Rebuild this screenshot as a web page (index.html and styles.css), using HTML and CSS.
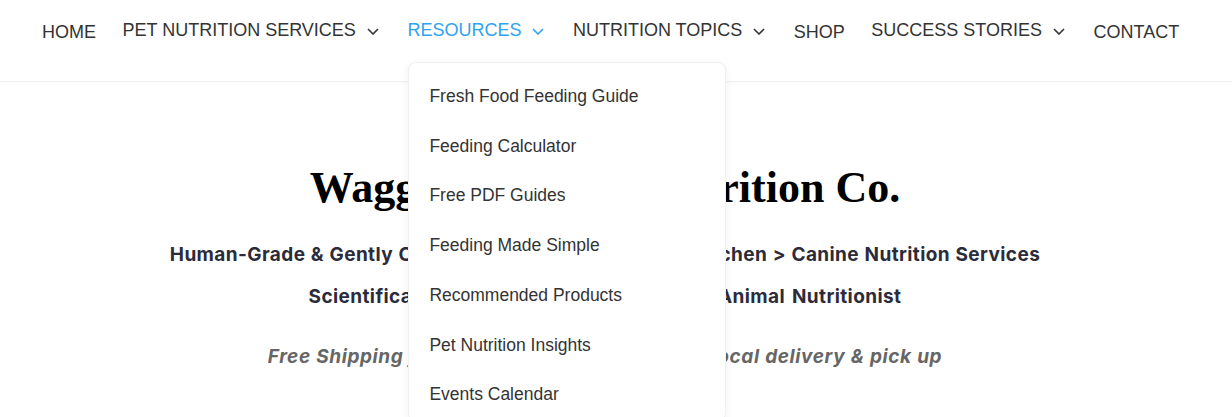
FILE: index.html
```html
<!DOCTYPE html>
<html lang="en">
<head>
<meta charset="utf-8">
<title>Waggin' Tails Pet Nutrition Co.</title>
<link rel="stylesheet" href="styles.css">
</head>
<body>
<header class="site-header">
  <nav class="main-nav">
    <ul class="nav-list">
      <li class="nav-item"><a class="nav-link" href="#">HOME</a></li>
      <li class="nav-item has-sub"><a class="nav-link" href="#">PET NUTRITION SERVICES<svg class="chev" viewBox="0 0 12 7"><path d="M1 1l5 5 5-5"/></svg></a></li>
      <li class="nav-item has-sub is-active"><a class="nav-link" href="#">RESOURCES<svg class="chev" viewBox="0 0 12 7"><path d="M1 1l5 5 5-5"/></svg></a>
        <ul class="dropdown">
          <li><a href="#">Fresh Food Feeding Guide</a></li>
          <li><a href="#">Feeding Calculator</a></li>
          <li><a href="#">Free PDF Guides</a></li>
          <li><a href="#">Feeding Made Simple</a></li>
          <li><a href="#">Recommended Products</a></li>
          <li><a href="#">Pet Nutrition Insights</a></li>
          <li><a href="#">Events Calendar</a></li>
        </ul>
      </li>
      <li class="nav-item has-sub"><a class="nav-link" href="#">NUTRITION TOPICS<svg class="chev" viewBox="0 0 12 7"><path d="M1 1l5 5 5-5"/></svg></a></li>
      <li class="nav-item"><a class="nav-link" href="#">SHOP</a></li>
      <li class="nav-item has-sub"><a class="nav-link" href="#">SUCCESS STORIES<svg class="chev" viewBox="0 0 12 7"><path d="M1 1l5 5 5-5"/></svg></a></li>
      <li class="nav-item"><a class="nav-link" href="#">CONTACT</a></li>
    </ul>
  </nav>
</header>
<main class="hero">
  <h1 class="hero-title">Waggin' Tails Pet Nutrition Co.</h1>
  <p class="hero-line hero-line--first">Human-Grade &amp; Gently Cooked Fresh Meals from Our Kitchen &gt; Canine Nutrition Services</p>
  <p class="hero-line hero-line--second">Scientifically Formulated with a Certified Animal Nutritionist</p>
  <p class="hero-note">Free Shipping for orders over $100 | Free for local delivery &amp; pick up</p>
</main>
</body>
</html>
```
FILE: styles.css
```css
* { box-sizing: border-box; }
html, body { margin: 0; padding: 0; background: #fff; }
body { font-family: "Liberation Sans", Arial, sans-serif; color: #333; overflow: hidden; height: 417px; }

.site-header {
  height: 82px;
  border-bottom: 1px solid #f0f0f0;
  box-shadow: 0 1px 4px rgba(0,0,0,0.03);
  position: relative;
  z-index: 5;
  background: #fff;
}
.nav-list {
  list-style: none;
  margin: 0;
  padding: 0 0 0 42px;
  display: flex;
  gap: 26.5px;
}
.nav-item { position: relative; }
.nav-link {
  display: flex;
  align-items: center;
  text-decoration: none;
  color: #333;
  font-size: 18px;
  line-height: 22px;
  padding-top: 21px;
}
.has-sub .nav-link { padding-top: 19px; }
.chev {
  width: 12px;
  height: 7px;
  margin-left: 11px;
  margin-right: 2px;
  margin-top: 2px;
  fill: none;
  stroke: #333;
  stroke-width: 1.6;
}
.is-active .nav-link { color: #2ea3f2; }
.is-active .chev { stroke: #2ea3f2; }

.dropdown {
  position: absolute;
  left: 1px;
  top: 62px;
  width: 318px;
  margin: 0;
  padding: 9px 0 0;
  list-style: none;
  background: #fff;
  border: 1px solid #f0f0f0;
  border-radius: 8px;
  box-shadow: 0 2px 10px rgba(0,0,0,0.06);
}
.dropdown li a {
  display: block;
  padding: 13px 20px;
  color: #333;
  text-decoration: none;
  font-size: 17.5px;
  line-height: 23.7px;
}

.hero {
  text-align: center;
  padding: 81px 22px 0 0;
}
.hero-title {
  margin: 0 0 31px;
  font-family: "Liberation Serif", "Times New Roman", serif;
  font-weight: 700;
  font-size: 44px;
  line-height: 50px;
  color: #000;
}
.hero-line {
  margin: 0 0 20px;
  font-family: Inter, "Open Sans", sans-serif;
  font-weight: 700;
  font-size: 19px;
  letter-spacing: 0.4px;
  line-height: 22px;
  color: #2c2b3a;
}
.hero-line--first { word-spacing: 0.6px; }
.hero-line--second { word-spacing: 2px; }
.hero-note {
  margin: 38px 0 0;
  font-family: Inter, "Open Sans", sans-serif;
  font-weight: 700;
  font-style: italic;
  font-size: 19px;
  letter-spacing: 0.6px;
  word-spacing: 0.4px;
  line-height: 22px;
  color: #666;
}
```
